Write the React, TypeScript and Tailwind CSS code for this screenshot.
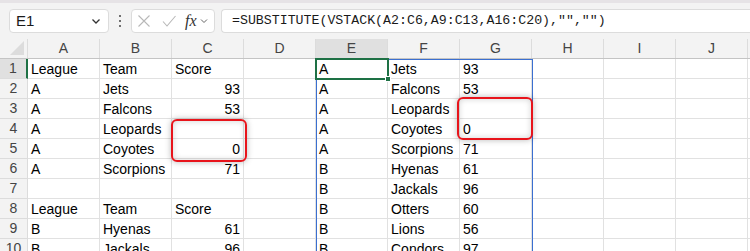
import React from 'react';

const cols = ['A', 'B', 'C', 'D', 'E', 'F', 'G', 'H', 'I', 'J', 'K'];

type Cell = { v: string; right?: boolean };

const left: Cell[][] = [
  [{ v: 'League' }, { v: 'Team' }, { v: 'Score' }],
  [{ v: 'A' }, { v: 'Jets' }, { v: '93', right: true }],
  [{ v: 'A' }, { v: 'Falcons' }, { v: '53', right: true }],
  [{ v: 'A' }, { v: 'Leopards' }, { v: '' }],
  [{ v: 'A' }, { v: 'Coyotes' }, { v: '0', right: true }],
  [{ v: 'A' }, { v: 'Scorpions' }, { v: '71', right: true }],
  [{ v: '' }, { v: '' }, { v: '' }],
  [{ v: 'League' }, { v: 'Team' }, { v: 'Score' }],
  [{ v: 'B' }, { v: 'Hyenas' }, { v: '61', right: true }],
  [{ v: 'B' }, { v: 'Jackals' }, { v: '96', right: true }],
];

const spill = [
  ['A', 'Jets', '93'],
  ['A', 'Falcons', '53'],
  ['A', 'Leopards', ''],
  ['A', 'Coyotes', '0'],
  ['A', 'Scorpions', '71'],
  ['B', 'Hyenas', '61'],
  ['B', 'Jackals', '96'],
  ['B', 'Otters', '60'],
  ['B', 'Lions', '56'],
  ['B', 'Condors', '97'],
];

function Toolbar() {
  return (
    <div className="flex h-[39px] items-center gap-0 border-t-[3px] border-[#e6e3e6] bg-[#f3f3f3] pl-[9px]">
      <div className="flex h-[24px] w-[100px] items-center justify-between rounded-[4px] border border-[#dcdcdc] bg-white pl-[6px] pr-[6px]">
        <span className="text-[15px] text-[#1a1a1a]">E1</span>
        <svg width="12" height="12" viewBox="0 0 12 12" fill="none" stroke="#333" strokeWidth="1.3">
          <path d="M2.5 4.5 6 8l3.5-3.5" />
        </svg>
      </div>
      <div className="flex w-[22px] flex-col items-center gap-[3px]">
        <span className="h-[2px] w-[2px] rounded-full bg-[#444]" />
        <span className="h-[2px] w-[2px] rounded-full bg-[#444]" />
        <span className="h-[2px] w-[2px] rounded-full bg-[#444]" />
      </div>
      <div className="flex h-[24px] w-[84px] items-center rounded-[4px] border border-[#dcdcdc] bg-white pl-[5px]">
        <svg width="14" height="14" viewBox="0 0 14 14" fill="none" stroke="#b8b8b8" strokeWidth="1.1">
          <path d="M1.5 1.5l11 11M12.5 1.5l-11 11" />
        </svg>
        <svg className="ml-[11px]" width="14" height="14" viewBox="0 0 14 14" fill="none" stroke="#b8b8b8" strokeWidth="1.1">
          <path d="M1 7.5l4 4.5L13.5 2" />
        </svg>
        <span className="ml-[9px] font-['Liberation_Serif',serif] text-[16px] italic text-[#333]">fx</span>
        <svg className="ml-[2px]" width="10" height="10" viewBox="0 0 10 10" fill="none" stroke="#666" strokeWidth="1">
          <path d="M2 3.5 5 6.5l3-3" />
        </svg>
      </div>
      <div className="ml-[6px] flex h-[24px] flex-1 items-center rounded-l-[4px] border border-r-0 border-[#dcdcdc] bg-white pl-[10px]">
        <span className="font-['Liberation_Mono',monospace] text-[13.25px] text-[#1a1a1a]">
          =SUBSTITUTE(VSTACK(A2:C6,A9:C13,A16:C20),"","")
        </span>
      </div>
    </div>
  );
}

function GridCell({ text, right, last }: { text: string; right?: boolean; last?: boolean }) {
  return (
    <div
      className={`flex h-[20px] w-[72px] shrink-0 items-center overflow-hidden whitespace-nowrap border-r border-b border-[#e1e1e1] px-[3px] pt-[1px] text-[14px] text-black ${
        right ? 'justify-end' : 'justify-start'
      } ${last ? '' : ''}`}
    >
      {text}
    </div>
  );
}

export default function App() {
  return (
    <div className="h-[251px] w-[750px] overflow-hidden bg-white font-['Liberation_Sans',Arial,sans-serif]">
      <Toolbar />
      <div className="relative">
        <div className="flex h-[20px] border-b border-[#c4c4c4] bg-[#f3f3f3]">
          <div className="relative w-[28px] shrink-0 border-r border-[#dcdcdc]">
            <svg className="absolute bottom-[3px] right-[3px]" width="14" height="14" viewBox="0 0 14 14">
              <path d="M14 0V14H0Z" fill="#dcdcdc" />
            </svg>
          </div>
          {cols.map((c) => (
            <div
              key={c}
              className={`flex w-[72px] shrink-0 items-center justify-center border-r border-[#dcdcdc] text-[14px] text-[#444] ${
                c === 'E' ? 'bg-[#e0e0e0]' : ''
              }`}
            >
              {c}
            </div>
          ))}
        </div>
        {left.map((row, i) => (
          <div key={i} className="flex">
            <div
              className={`flex h-[20px] w-[28px] shrink-0 items-center justify-center border-b border-[#dcdcdc] text-[14px] text-[#444] ${
                i === 0 ? 'border-r-2 border-r-[#1e7145] bg-[#e0e0e0]' : 'border-r border-r-[#dcdcdc] bg-[#f3f3f3]'
              }`}
            >
              {i + 1}
            </div>
            {row.map((c, j) => (
              <GridCell key={j} text={c.v} right={c.right} />
            ))}
            <GridCell text="" />
            {spill[i].map((v, j) => (
              <GridCell key={'s' + j} text={v} />
            ))}
            <GridCell text="" />
            <GridCell text="" />
            <GridCell text="" />
            <GridCell text="" />
          </div>
          ))}

        {/* spill range border */}
        <div className="pointer-events-none absolute left-[316px] top-[20px] h-[300px] w-[217px] border border-[#3b6fd0]" />
        {/* active cell */}
        <div className="pointer-events-none absolute left-[315px] top-[19px] h-[22px] w-[74px] border-2 border-[#1e7145]">
          <span className="absolute -bottom-[4px] -right-[4px] h-[6px] w-[6px] border border-white bg-[#1e7145]" />
        </div>
        {/* callouts */}
        <div className="pointer-events-none absolute left-[171px] top-[80px] h-[43px] w-[76px] rounded-[6px] border-2 border-[#e8141b] shadow-[0_0_6px_rgba(0,0,0,0.28),inset_0_0_6px_rgba(0,0,0,0.18)]" />
        <div className="pointer-events-none absolute left-[457px] top-[58px] h-[43px] w-[76px] rounded-[6px] border-2 border-[#e8141b] shadow-[0_0_6px_rgba(0,0,0,0.28),inset_0_0_6px_rgba(0,0,0,0.18)]" />
      </div>
    </div>
  );
}
